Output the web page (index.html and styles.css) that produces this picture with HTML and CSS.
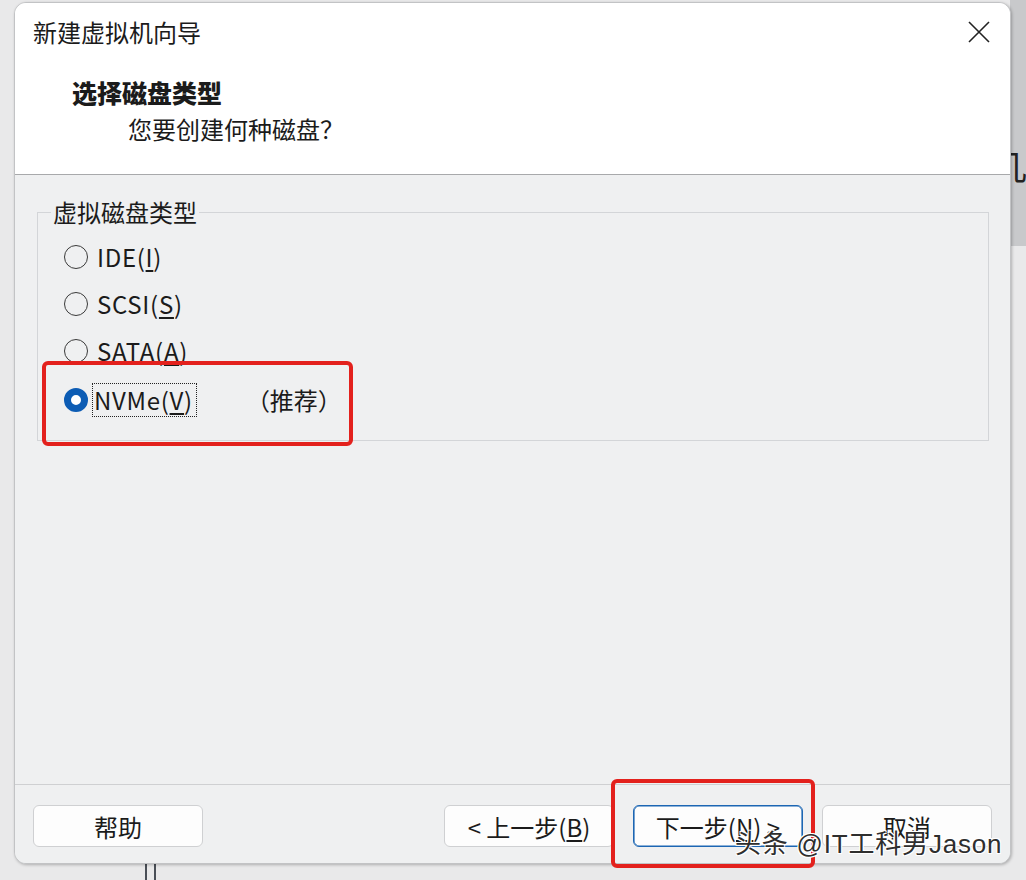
FILE: index.html
```html
<!DOCTYPE html>
<html lang="zh-CN">
<head>
<meta charset="utf-8">
<title>新建虚拟机向导</title>
<link rel="stylesheet" href="styles.css">
</head>
<body>
<div class="desktop">
  <div class="desk-strip"><span class="desk-glyph">几</span></div>
  <div class="desk-line desk-line-a"></div>
  <div class="desk-line desk-line-b"></div>
  <div class="window">
    <div class="header">
      <div class="titlebar">
        <span class="title">新建虚拟机向导</span>
        <svg class="close" width="22" height="22" viewBox="0 0 22 22"><path d="M1 1L21 21M21 1L1 21"/></svg>
      </div>
      <div class="heading">选择磁盘类型</div>
      <div class="subheading">您要创建何种磁盘？</div>
    </div>
    <div class="content">
      <fieldset class="group">
        <legend>虚拟磁盘类型</legend>
        <div class="radio-row"><span class="radio"></span><span class="label">IDE(<u>I</u>)</span></div>
        <div class="radio-row"><span class="radio"></span><span class="label">SCSI(<u>S</u>)</span></div>
        <div class="radio-row"><span class="radio"></span><span class="label">SATA(<u>A</u>)</span></div>
        <div class="radio-row last"><span class="radio checked"></span><span class="label focus">NVMe(<u>V</u>)</span><span class="recommend">（推荐）</span></div>
      </fieldset>
    </div>
    <div class="footer">
      <button class="btn">帮助</button>
      <div class="spacer"></div>
      <button class="btn">&lt; 上一步(<u>B</u>)</button>
      <button class="btn primary">下一步(<u>N</u>) &gt;</button>
      <button class="btn">取消</button>
    </div>
  </div>
  <div class="mark mark-radio"></div>
  <div class="mark mark-next"></div>
  <div class="watermark">头条 @IT工科男Jason</div>
</div>
</body>
</html>
```
FILE: styles.css
```css
* { box-sizing: border-box; }
html, body { margin: 0; padding: 0; }
body {
  background: #e9e9ea;
  font-family: "Noto Sans CJK SC", "Microsoft YaHei", sans-serif;
  color: #1b1b1b;
}
.desktop {
  position: relative;
  width: 1026px;
  height: 880px;
  overflow: hidden;
  padding: 2px 0 0 14px;
  background: #e9e9ea;
}
.desk-strip {
  position: absolute;
  right: 0;
  top: 0;
  width: 16px;
  height: 246px;
  background: #c8c9cb;
  overflow: hidden;
}
.desk-glyph {
  position: absolute;
  left: -17px;
  top: 146px;
  font-size: 34px;
  line-height: 40px;
  color: #222;
}
.desk-line {
  position: absolute;
  top: 860px;
  width: 2px;
  height: 20px;
  background: #4a4f57;
}
.desk-line-a { left: 145px; }
.desk-line-b { left: 154px; }

.window {
  position: relative;
  width: 997px;
  height: 862px;
  border: 1px solid #c2c3c5;
  border-radius: 12px;
  background: #eff0f1;
  overflow: hidden;
  display: flex;
  flex-direction: column;
  box-shadow: 1px 1px 3px rgba(0,0,0,0.25);
}
.header {
  background: #ffffff;
  height: 172px;
  border-bottom: 1px solid #a8a9ab;
}
.titlebar {
  height: 58px;
  display: flex;
  align-items: center;
  justify-content: space-between;
  padding: 0 20px 0 18px;
}
.title {
  font-size: 24px;
  line-height: 30px;
}
.close {
  stroke: #222;
  stroke-width: 1.6;
  fill: none;
}
.heading {
  margin-top: 14px;
  padding-left: 57px;
  font-size: 25px;
  line-height: 34px;
  font-weight: 900;
}
.subheading {
  margin-top: 3px;
  padding-left: 113px;
  font-size: 24px;
  line-height: 34px;
}
.content {
  flex: 1;
  background: #eff0f1;
}
.group {
  margin: 22px 21px 0 22px;
  border: 1px solid #d3d5d8;
  padding: 6px 0 17px 26px;
  min-width: 0;
}
.group legend {
  font-size: 24px;
  line-height: 30px;
  padding: 0 2px;
  margin-left: -13px;
}
.radio-row {
  height: 47px;
  display: flex;
  align-items: center;
  font-size: 24px;
}
.radio-row.last { margin-top: 2px; }
.radio {
  width: 24px;
  height: 24px;
  border: 1.6px solid #3a3a3a;
  border-radius: 50%;
  margin-right: 9px;
  flex: none;
}
.radio.checked {
  border: 7.5px solid #0c5cb4;
  background: #ffffff;
}
.label { line-height: 32px; letter-spacing: 0.7px; }
.label u { text-underline-offset: 3px; }
.focus {
  outline: 1px dotted #222;
  outline-offset: 0;
  margin-left: -4px;
  padding: 0 3px 0 1px;
}
.recommend {
  margin-left: 50px;
}
.footer {
  border-top: 1px solid #cfd0d2;
  padding: 20px 18px 16px 18px;
  display: flex;
  align-items: center;
  background: #eff0f1;
}
.spacer { flex: 1; }
.btn {
  width: 170px;
  height: 42px;
  border: 1px solid #cfd0d2;
  border-radius: 6px;
  background: #fdfdfd;
  font-family: "Noto Sans CJK SC", "Microsoft YaHei", sans-serif;
  font-size: 24px;
  color: #1b1b1b;
  padding: 0;
  margin-left: 19px;
}
.btn:first-child { margin-left: 0; }
.btn u { text-underline-offset: 3px; }
.btn.primary {
  border: 1px solid #1c66b3;
  box-shadow: inset 0 0 0 0.6px #1c66b3;
}
.mark {
  position: absolute;
  border: 4px solid #e3211d;
  border-radius: 6px;
}
.mark-radio {
  left: 42px;
  top: 361px;
  width: 311px;
  height: 85px;
}
.mark-next {
  left: 611px;
  top: 779px;
  width: 204px;
  height: 89px;
}
.watermark {
  position: absolute;
  left: 735px;
  top: 826px;
  font-family: "Liberation Sans", "Noto Sans CJK SC", sans-serif;
  font-size: 26px;
  line-height: 36px;
  letter-spacing: 0.8px;
  color: #2e2e2e;
  white-space: nowrap;
  text-shadow: 1px 1px 0 #fff, -1px -1px 0 #fff, 1px -1px 0 #fff, -1px 1px 0 #fff;
}
```
